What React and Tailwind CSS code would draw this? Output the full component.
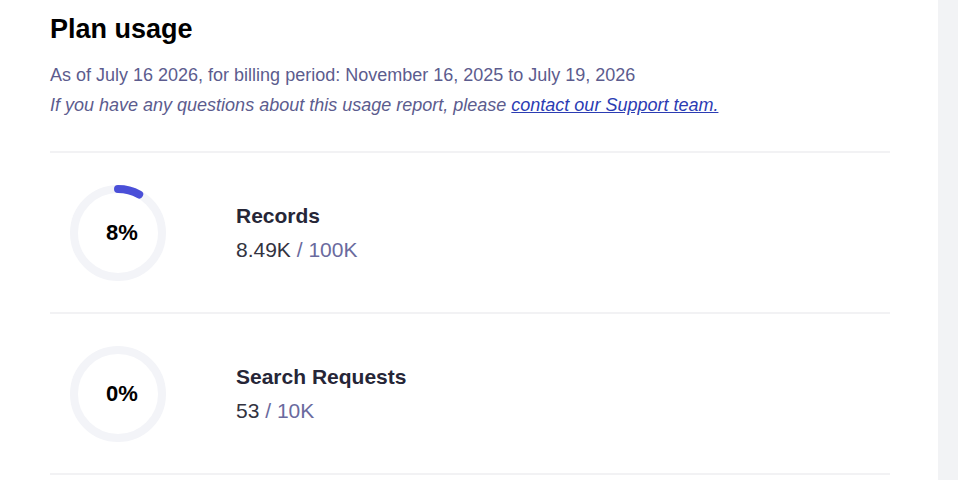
import React from 'react';

const usage = [
    { label: 'Records', used: '8.49K', limit: '100K', pct: 8 },
    { label: 'Search Requests', used: '53', limit: '10K', pct: 0 },
];

const Ring = ({ pct }) => {
    const r = 44;
    const c = 2 * Math.PI * r;
    return (
        <div className="relative w-[96px] h-[96px] shrink-0">
            <svg width="96" height="96" viewBox="0 0 96 96" className="absolute inset-0">
                <circle cx="48" cy="48" r={r} fill="none" stroke="#f3f4f8" strokeWidth="8" />
                {pct > 0 && (
                    <circle
                        cx="48"
                        cy="48"
                        r={r}
                        fill="none"
                        stroke="#4a4fd8"
                        strokeWidth="8"
                        strokeLinecap="round"
                        strokeDasharray={`${(c * pct) / 100} ${c}`}
                        transform="rotate(-90 48 48)"
                    />
                )}
            </svg>
            <div className="absolute inset-0 flex items-center justify-center pl-2 text-[22px] font-bold text-black">
                {pct}%
            </div>
        </div>
    );
};

export default function App() {
    return (
        <div className="flex w-[958px] h-[480px] overflow-hidden bg-white font-['Liberation_Sans',Arial,sans-serif]">
            <div className="w-[938px] shrink-0 pl-[50px] pt-[13px]">
                <div className="w-[840px]">
                    <h1 className="text-[27px] leading-8 font-bold text-black">Plan usage</h1>
                    <p className="mt-[18px] text-[18px] leading-6 text-[#5c5c8e]">
                        As of July 16 2026, for billing period: November 16, 2025 to July 19, 2026
                    </p>
                    <p className="mt-[6px] text-[18px] leading-6 italic text-[#5c5c8e]">
                        If you have any questions about this usage report, please{' '}
                        <a href="#" className="underline text-[#2b3cb3]">contact our Support team.</a>
                    </p>
                    <div className="mt-[34px] h-[2px] bg-[#f2f2f4]" />
                    {usage.map((u) => (
                        <div key={u.label}>
                            <div className="h-[159px] flex items-center pl-5">
                                <Ring pct={u.pct} />
                                <div className="ml-[70px] flex flex-col gap-[4px]">
                                    <div className="text-[21px] leading-[30px] font-bold text-[#262637]">{u.label}</div>
                                    <div className="text-[21px] leading-[30px] text-[#333340]">
                                        {u.used} <span className="text-[#6a6a9e]">/ {u.limit}</span>
                                    </div>
                                </div>
                            </div>
                            <div className="h-[2px] bg-[#f2f2f4]" />
                        </div>
                    ))}
                </div>
            </div>
            <div className="flex-1 bg-[#f2f3f5]" />
        </div>
    );
}
